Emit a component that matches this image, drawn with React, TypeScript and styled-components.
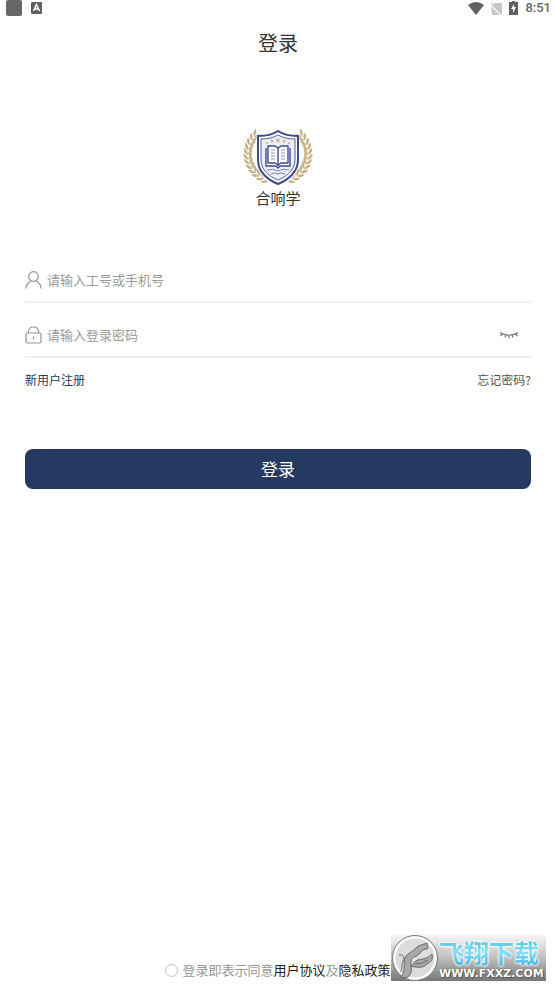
import React, { useState } from "react";
import styled, { createGlobalStyle } from "styled-components";

const GlobalStyle = createGlobalStyle`
  * { box-sizing: border-box; }
  body {
    margin: 0;
    background: #fff;
    color: #333;
    font-family: "Noto Sans CJK SC", "Noto Sans", sans-serif;
  }
`;

const Page = styled.div`
  min-height: 100vh;
  padding-right: 1px;
  display: flex;
  flex-direction: column;
`;

const StatusBar = styled.div`
  height: 16px;
  padding: 0 5px 0 6px;
  display: flex;
  align-items: center;
  justify-content: space-between;
`;

const StatusGroup = styled.div<{ $gap: number }>`
  display: flex;
  align-items: center;
  gap: ${(p) => p.$gap}px;
`;

const AppSquare = styled.span`
  width: 16px;
  height: 16px;
  border-radius: 2px;
  background: #666;
`;

const Clock = styled.span`
  font: 500 13px/16px Roboto, sans-serif;
  color: #666;
`;

const Title = styled.h1`
  margin: 12px 0 0;
  text-align: center;
  font-size: 20px;
  line-height: 30px;
  font-weight: 400;
`;

const Brand = styled.div`
  margin-top: 68px;
  display: flex;
  flex-direction: column;
  align-items: center;
`;

const BrandName = styled.div`
  font-size: 15px;
  line-height: 20px;
`;

const Form = styled.form`
  flex: 1;
  margin-top: 52px;
  padding: 0 25px;
  display: flex;
  flex-direction: column;
`;

const Field = styled.label`
  height: 43px;
  margin-bottom: 12px;
  padding: 0 12px 2px 0;
  border-bottom: 2px solid #f0f0f0;
  display: flex;
  align-items: center;
  gap: 5px;
`;

const TextInput = styled.input`
  flex: 1;
  min-width: 0;
  padding: 0;
  border: 0;
  outline: 0;
  background: transparent;
  font: inherit;
  font-size: 13px;
  line-height: 20px;
  color: #333;
  &::placeholder { color: #999; opacity: 1; }
`;

const IconButton = styled.button`
  padding: 0;
  border: 0;
  background: none;
  display: flex;
  cursor: pointer;
`;

const Links = styled.div`
  display: flex;
  justify-content: space-between;
`;

const TextLink = styled.a<{ $tone: string }>`
  color: ${(p) => p.$tone};
  font-size: 13px;
  line-height: 20px;
  text-decoration: none;
`;

const SmallLink = styled(TextLink)`
  font-size: 12px;
`;

const Submit = styled.button`
  height: 40px;
  margin-top: 59px;
  border: 0;
  border-radius: 8px;
  background: #263961;
  color: #fff;
  font: inherit;
  font-size: 17px;
  line-height: 24px;
  cursor: pointer;
`;

const Consent = styled.div`
  margin-top: auto;
  padding-bottom: 13px;
  display: flex;
  align-items: center;
  justify-content: center;
  gap: 4px;
  font-size: 13px;
  line-height: 20px;
  color: #999;
  white-space: nowrap;
`;

const Tick = styled.input`
  appearance: none;
  width: 13px;
  height: 13px;
  margin: 0;
  border: 1px solid #c4c4c4;
  border-radius: 50%;
  &:checked { background: #263961; }
`;

const Watermark = styled.div`
  position: fixed;
  right: 11px;
  bottom: 12px;
  height: 46px;
  width: 155px;
  display: flex;
  align-items: center;
  background: linear-gradient(#f6f6f6, #c4c4c4 45%, #777);
`;

const WatermarkText = styled.div`
  display: flex;
  flex-direction: column;
  white-space: nowrap;
`;

const SiteName = styled.span`
  font-size: 25px;
  line-height: 32px;
  font-weight: 700;
  color: transparent;
  background: linear-gradient(#5cc8e8 20%, #86e2f8 50%, #4fbce8 85%);
  background-clip: text;
  -webkit-background-clip: text;
  filter: drop-shadow(0 0 1px #fff) drop-shadow(0 0 1px #fff);
`;

const SiteUrl = styled.span`
  font: 700 11px/12px "DejaVu Sans", sans-serif;
  color: #fff;
  text-shadow: 0 0 1px #444, 1px 1px 1px #555;
`;

const branch = Array.from({ length: 12 }, (_, i) => {
  const degrees = 220 - i * 10;
  const angle = (degrees * Math.PI) / 180;
  return {
    x: 36 + 30 * Math.cos(angle),
    y: 28 + 28 * Math.sin(angle),
    turn: degrees + 90,
  };
});

const Laurel = () => (
  <g fill="#cbb084">
    {branch.map((leaf, i) => (
      <g key={i} transform={`translate(${leaf.x} ${leaf.y}) rotate(${leaf.turn})`}>
        <path d="M-1 0C0-3 3-5 6-4C5-2 2 0-1 0Z" />
        <path d="M-1 0C0 3 3 5 6 4C5 2 2 0-1 0Z" />
      </g>
    ))}
  </g>
);

const star = "M0-2L.6-.6L2-.5L.9.4L1.3 2L0 1.1L-1.3 2L-.9.4L-2-.5L-.6-.6Z";

const Crest = () => (
  <svg width="72" height="62" viewBox="0 0 72 62" aria-hidden="true">
    <Laurel />
    <g transform="translate(72 0) scale(-1 1)"><Laurel /></g>
    <path d="M36 4C30 9 23 10 16 10V34C16 47 26 55 36 60C46 55 56 47 56 34V10C49 10 42 9 36 4Z" fill="#fff" stroke="#fff" strokeWidth="3" />
    <path d="M36 5C30 9 23 10 16 10V34C16 46 26 54 36 58C46 54 56 46 56 34V10C49 10 42 9 36 5Z" fill="#fff" stroke="#3f4990" strokeWidth="2" />
    <path d="M36 9C31 12 25 13 19 13V34C19 44 28 51 36 54C44 51 53 44 53 34V13C47 13 41 12 36 9Z" fill="#eceefa" stroke="#5660a2" strokeWidth="1" />
    <g fill="#cbb084">
      <path d={star} transform="translate(36 14) scale(1.3)" />
      <path d={star} transform="translate(30 15)" />
      <path d={star} transform="translate(42 15)" />
      <path d={star} transform="translate(25 17) scale(.8)" />
      <path d={star} transform="translate(47 17) scale(.8)" />
    </g>
    <g fill="#fff" stroke="#3f4990" strokeWidth="1.4" strokeLinejoin="round">
      <path d="M24 22V40H34L36 42L38 40H48V22" />
      <path d="M26 20H33L36 22L39 20H46V37H39L36 39L33 37H26Z" />
      <path d="M36 22V40" />
    </g>
    <path d="M29 24H33M29 27H33M29 30H33M29 33H33M39 24H43M39 27H43M39 30H43M39 33H43" stroke="#8c94c6" strokeWidth="1" />
    <path d="M25 44Q31 42 36 45Q41 42 47 44M29 48Q34 46 36 48Q38 46 43 48" fill="none" stroke="#7d86bd" strokeWidth="1" />
  </svg>
);

const Swirl = () => (
  <svg width="48" height="46" viewBox="0 0 48 46" aria-hidden="true">
    <circle cx="24" cy="23" r="22.5" fill="#eee" stroke="#777" />
    <circle cx="24" cy="23" r="20.5" fill="#dcdcdc" stroke="#fff" strokeWidth="2" />
    <g fill="#a8a8a8" stroke="#686868" strokeWidth="1" strokeLinejoin="round">
      <path d="M10 42C15 35 12 28 14 23C16 18 22 17 25 13C27 10 32 10 36 8C36 11 38 12 36 14C33 14 31 15 29 18C26 22 21 21 20 26C19 32 23 36 17 42Q13 44 10 42Z" />
      <path d="M8 20C12 19 14 22 12 26C10 30 12 34 9 37" fill="none" />
      <path d="M20 31C23 29 23 26 27 25C32 24 36 24 41 19C42 23 41 27 37 28C34 32 29 33 25 32Q22 32 20 31Z" />
      <path d="M24 29Q31 29 37 25" fill="none" />
    </g>
  </svg>
);

export default function App() {
  const [visible, setVisible] = useState(false);
  return (
    <Page>
      <GlobalStyle />
      <StatusBar>
        <StatusGroup $gap={9}>
          <AppSquare />
          <svg width="11" height="12" viewBox="0 0 11 12" aria-hidden="true">
            <rect width="11" height="12" rx="1" fill="#606060" />
            <path d="M2.5 9L5.5 2.5L8.5 9M3.6 7H7.4" fill="none" stroke="#fff" strokeWidth="1.4" />
          </svg>
        </StatusGroup>
        <StatusGroup $gap={7}>
          <svg width="16" height="13" viewBox="0 0 16 13" aria-hidden="true">
            <path d="M0 3Q8-3 16 3L8 13Z" fill="#606060" />
          </svg>
          <svg width="11" height="13" viewBox="0 0 11 13" aria-hidden="true">
            <path d="M4 1H11V12L1 3Z M0 4L9 13H1Z" fill="#c8c8c8" />
            <path d="M0 1L11 13" stroke="#b4b4b4" />
          </svg>
          <svg width="9" height="14" viewBox="0 0 9 14" aria-hidden="true">
            <path d="M3 0H6V1H9V14H0V1H3Z" fill="#606060" />
            <path d="M5 3L2 8H4V12L7 6H5Z" fill="#fff" />
          </svg>
          <Clock>8:51</Clock>
        </StatusGroup>
      </StatusBar>

      <Title>登录</Title>
      <Brand>
        <Crest />
        <BrandName>合响学</BrandName>
      </Brand>

      <Form onSubmit={(e) => e.preventDefault()}>
        <Field>
          <svg width="17" height="18" viewBox="0 0 17 18" fill="none" stroke="#949494" strokeWidth="1.2" aria-hidden="true">
            <circle cx="8.5" cy="5.5" r="4.8" />
            <path d="M1 17.5C1 13.5 3 11.5 6 10M16 17.5C16 13.5 14 11.5 11 10" />
          </svg>
          <TextInput aria-label="工号或手机号" placeholder="请输入工号或手机号" />
        </Field>
        <Field>
          <svg width="17" height="18" viewBox="0 0 17 18" fill="none" stroke="#949494" strokeWidth="1.2" aria-hidden="true">
            <rect x="1" y="7" width="15" height="10" rx="1.5" />
            <path d="M3.5 7V5.5C3.5 2.5 5.7 1 8.5 1S13.5 2.5 13.5 5.5V7M8.5 10.5V13.5" />
          </svg>
          <TextInput aria-label="登录密码" type={visible ? "text" : "password"} placeholder="请输入登录密码" />
          <IconButton type="button" aria-label="显示密码" onClick={() => setVisible(!visible)}>
            <svg width="20" height="8" viewBox="0 0 20 8" fill="none" stroke="#707070" strokeWidth="1.1" aria-hidden="true">
              <path d="M1 1.5Q10 7 19 1.5M3.5 3L1.5 5M7 4L6 6.5M10 4.5V7.5M13 4L14 6.5M16.5 3L18.5 5" />
            </svg>
          </IconButton>
        </Field>
        <Links>
          <SmallLink href="#register" $tone="#263961">新用户注册</SmallLink>
          <SmallLink href="#forgot" $tone="#555">忘记密码?</SmallLink>
        </Links>
        <Submit type="submit">登录</Submit>
        <Consent>
          <Tick type="checkbox" id="agree" />
          <span>
            <label htmlFor="agree">登录即表示同意</label>
            <TextLink href="#terms" $tone="#222">用户协议</TextLink>及
            <TextLink href="#privacy" $tone="#222">隐私政策</TextLink>
          </span>
        </Consent>
      </Form>

      <Watermark>
        <Swirl />
        <WatermarkText>
          <SiteName>飞翔下载</SiteName>
          <SiteUrl>WWW.FXXZ.COM</SiteUrl>
        </WatermarkText>
      </Watermark>
    </Page>
  );
}
